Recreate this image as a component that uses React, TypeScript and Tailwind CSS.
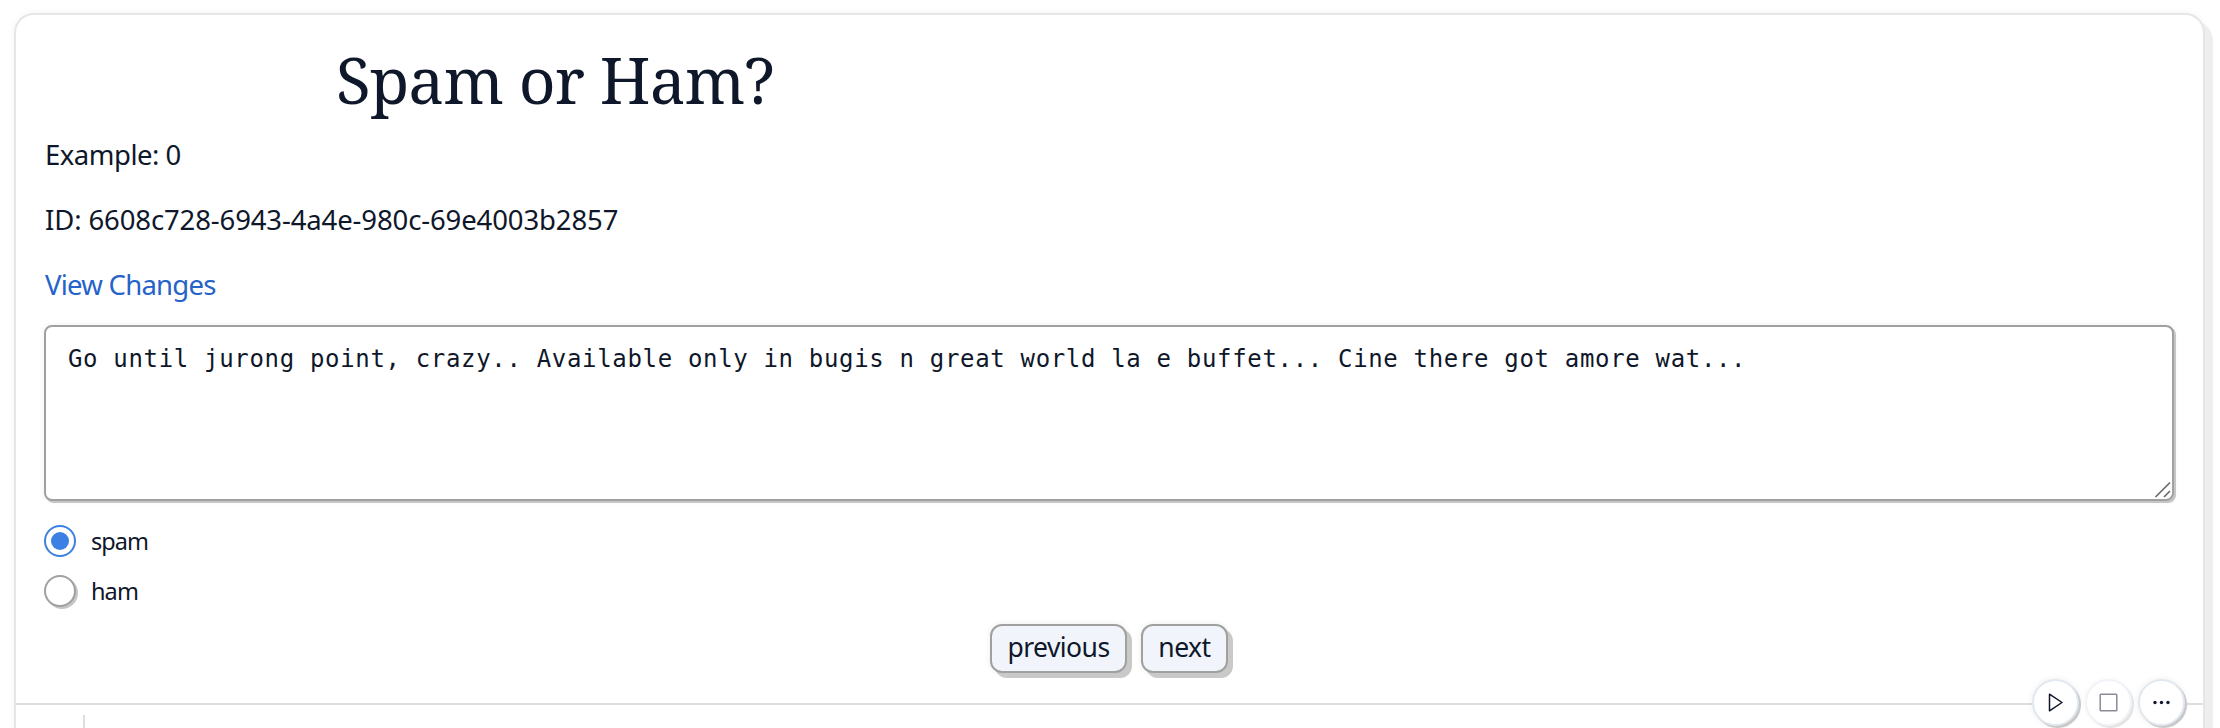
import type { ReactNode } from "react";

function Radio({ label, checked, tracking }: { label: string; checked?: boolean; tracking: string }) {
  return (
    <label className="flex h-8 items-center gap-[15px]">
      <span
        role="radio"
        aria-checked={!!checked}
        className={
          checked
            ? "flex size-8 items-center justify-center rounded-full border-2 border-[#3b80e2] bg-white"
            : "size-8 rounded-full border-2 border-[#a0a0a0] bg-white shadow-[2px_2px_0_#c6c6c6]"
        }
      >
        {checked && <span className="size-[18px] rounded-full bg-[#3b80e2]" />}
      </span>
      <span className={`text-[23.5px] leading-8 ${tracking}`}>{label}</span>
    </label>
  );
}

function Button({ children, className }: { children: ReactNode; className: string }) {
  return (
    <button
      className={`h-[49px] rounded-[12px] border-2 border-[#a0a0a0] bg-[#f1f5fb] pb-[2px] text-[26.5px] leading-[43px] shadow-[5px_5px_0_#c9c9c9,0_0_6px_rgba(0,0,0,0.08)] ${className}`}
    >
      {children}
    </button>
  );
}

function Tool({ children, dim }: { children: ReactNode; dim?: boolean }) {
  return (
    <button
      className={
        dim
          ? "size-[47px] rounded-full border-2 border-[#f1f3f8] bg-white shadow-[2px_2px_0_#e4e4e4,0_0_6px_rgba(0,0,0,0.04)]"
          : "size-[47px] rounded-full border-2 border-[#e2e8f0] bg-white shadow-[2px_2px_0_#c8c8c8,0_0_6px_rgba(0,0,0,0.08)]"
      }
    >
      {children}
    </button>
  );
}

export default function App() {
  return (
    <div className="h-[728px] overflow-hidden bg-white pt-[13px] pl-[14px] font-['Noto_Sans',sans-serif] text-[#0f172a]">
      <main className="relative h-[760px] w-[2191px] rounded-[20px] border-2 border-[#e6e6e6] bg-white shadow-[8px_8px_0_#eeeeee,0_0_8px_rgba(0,0,0,0.05)]">
        <section className="flex h-[688px] flex-col px-7">
          <h1 className="mt-[23px] ml-[292px] h-[84px] font-['Noto_Serif',serif] text-[64px] leading-[84px] tracking-[-0.9px] whitespace-nowrap">
            Spam or Ham?
          </h1>
          <p className="mt-[13px] h-[40px] pl-px text-[27.5px] leading-[40px] tracking-[-0.5px]">Example: 0</p>
          <p className="mt-[25px] h-[40px] pl-px text-[27.5px] leading-[40px] tracking-[-0.12px]">
            ID: 6608c728-6943-4a4e-980c-69e4003b2857
          </p>
          <a className="mt-[25px] h-[40px] pl-px text-[27.5px] leading-[40px] tracking-[-0.75px] text-[#2563c9]">View Changes</a>
          <div className="relative mt-[20px] h-[176px] w-[2130px] rounded-[8px] border-2 border-[#a0a0a0] bg-white shadow-[2px_2px_0_#c6c6c6,0_0_6px_rgba(0,0,0,0.06)]">
            <p className="pt-[14px] pl-[22px] font-['DejaVu_Sans_Mono',monospace] text-[24px] leading-[36px] tracking-[0.67px] whitespace-nowrap">
              Go until jurong point, crazy.. Available only in bugis n great world la e buffet... Cine there got amore wat...
            </p>
            <svg className="absolute right-0 bottom-0" width="18" height="18" viewBox="0 0 18 18" fill="none" stroke="#6b6b6b" strokeWidth="1.7">
              <path d="M1.5 16 16 1.5M10 16l6-6" />
            </svg>
          </div>
          <div className="mt-[24px] flex flex-col gap-[18px]">
            <Radio label="spam" checked tracking="tracking-[-1px]" />
            <Radio label="ham" tracking="tracking-[-0.9px]" />
          </div>
          <div className="mt-[17px] ml-[946px] flex gap-[14px]">
            <Button className="w-[137px] tracking-[-0.55px]">previous</Button>
            <Button className="w-[87px] tracking-[-0.5px]">next</Button>
          </div>
        </section>
        <div className="h-[2px] bg-[#dedede]" />
        <div className="mt-[10px] ml-[67px] h-10 w-[2px] bg-[#dedede]" />
        <div className="absolute top-[664px] right-[18px] flex gap-[6px] rounded-full bg-white">
          <Tool>
            <svg width="43" height="43" viewBox="0 0 43 43" fill="none" stroke="#0f172a" strokeWidth="1.5" strokeLinejoin="round">
              <path d="M15.5 13.2 28 21.5 15.5 29.8Z" />
            </svg>
          </Tool>
          <Tool dim>
            <svg width="43" height="43" viewBox="0 0 43 43" fill="none" stroke="#8b8b97" strokeWidth="1.5">
              <rect x="13.2" y="13.2" width="16.6" height="16.6" rx="0.8" />
            </svg>
          </Tool>
          <Tool>
            <svg width="43" height="43" viewBox="0 0 43 43" fill="#0f172a">
              <circle cx="15" cy="21.5" r="1.7" />
              <circle cx="21.5" cy="21.5" r="1.7" />
              <circle cx="28" cy="21.5" r="1.7" />
            </svg>
          </Tool>
        </div>
      </main>
    </div>
  );
}
